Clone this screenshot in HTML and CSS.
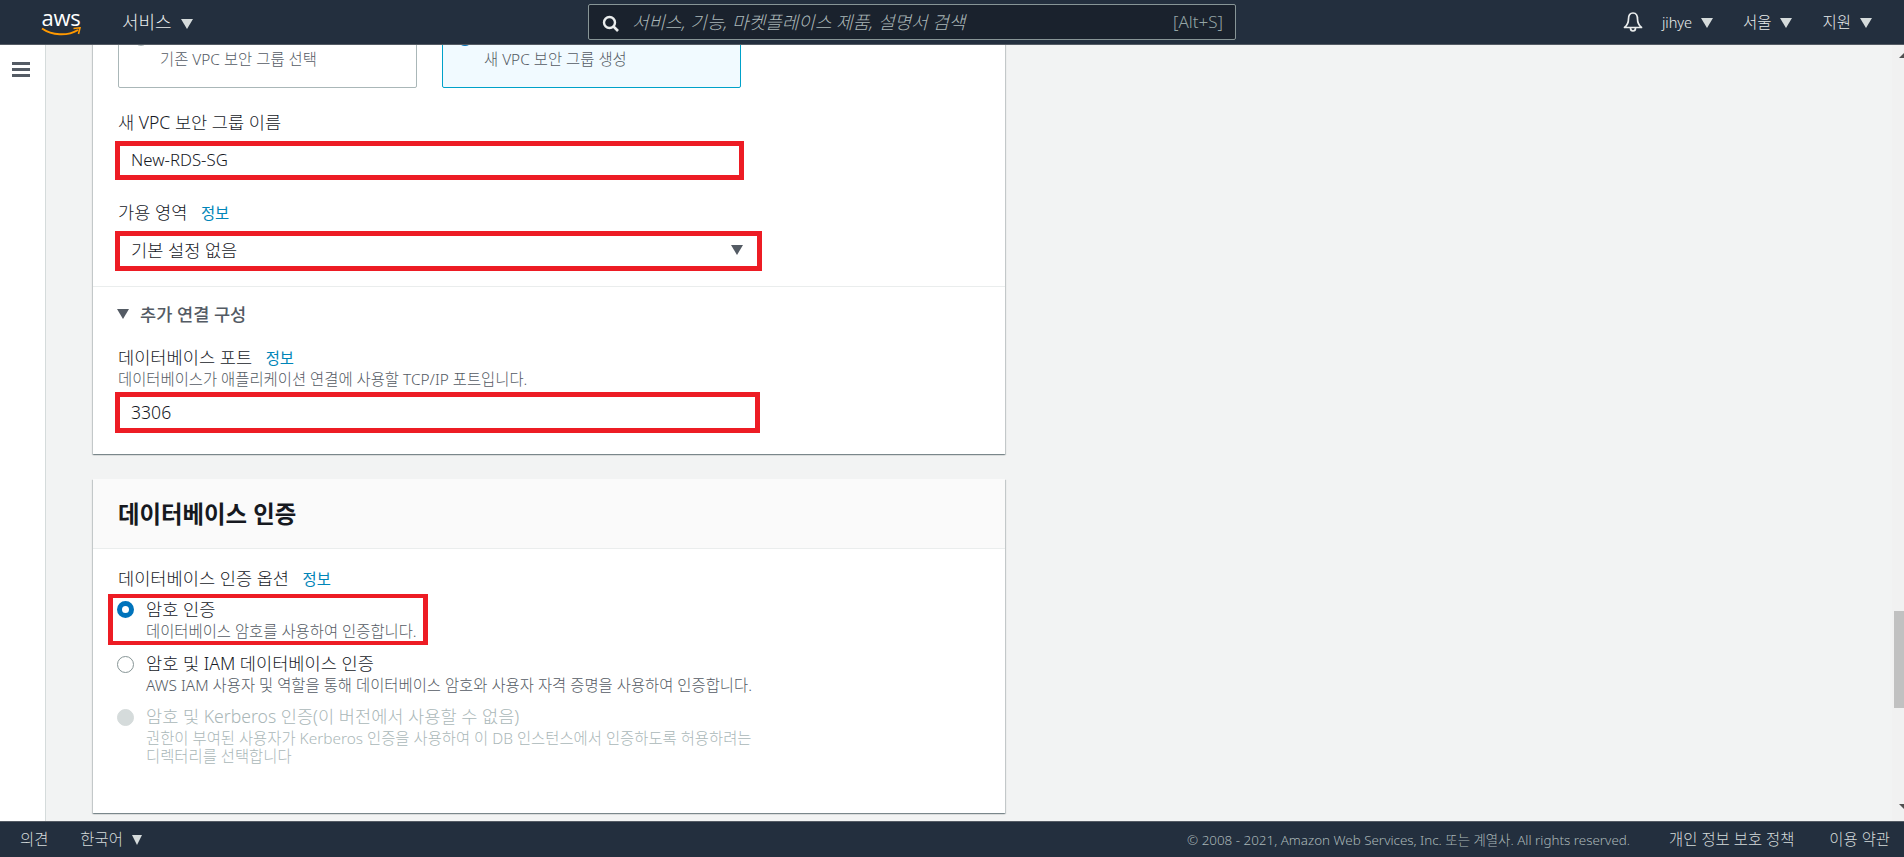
FILE: index.html
```html
<!doctype html>
<html lang="ko">

<head>
  <meta charset="UTF-8">
  <title>RDS</title>
  <link rel="stylesheet" href="styles.css">
</head>

<body>
  <header class="topnav">
    <div class="topnav-left">
      <a class="logo">
        <span class="logo-text">aws</span>
        <svg class="logo-smile" width="40" height="10" viewBox="0 0 40 10">
          <path d="M1 1.5C11 8.5 26 9.5 37 3" fill="none" stroke="#f90" stroke-width="2" />
          <path d="M32.5 1.5 39 .8 37.5 7" fill="none" stroke="#f90" stroke-width="1.6" />
        </svg>
      </a>
      <span class="menu-services">서비스 <i class="caret caret-nav"></i></span>
    </div>

    <div class="search">
      <svg class="search-icon" width="18" height="18" viewBox="0 0 18 18">
        <circle cx="7.5" cy="7.5" r="5.5" fill="none" stroke="#eaeded" stroke-width="2.4" />
        <path d="M11.5 11.5 16 16" stroke="#eaeded" stroke-width="2.6" />
      </svg>
      <span class="search-text">서비스, 기능, 마켓플레이스 제품, 설명서 검색</span>
      <span class="search-key">[Alt+S]</span>
    </div>

    <div class="topnav-right">
      <svg class="bell" width="20" height="22" viewBox="0 0 20 22">
        <path d="M10 2C6.500 2 5.500 5 5.500 8c0 4-1 6-4 8.500h17c-3-2.500-4-4.500-4-8.500 0-3-1-6-4.500-6Z" fill="none"
          stroke="#eaeded" stroke-width="1.700" stroke-linejoin="round" />
        <path d="M7.500 17c0 4 5 4 5 0" fill="none" stroke="#eaeded" stroke-width="1.700" />
      </svg>
      <span class="nav-item nav-user">jihye <i class="caret caret-nav"></i></span>
      <span class="nav-item">서울 <i class="caret caret-nav"></i></span>
      <span class="nav-item">지원 <i class="caret caret-nav"></i></span>
    </div>
  </header>

  <div class="layout">
    <nav class="sidebar">
      <span class="burger"></span>
    </nav>

    <main class="content">
      <div class="scrolled">
        <section class="card">
          <div class="card-body">
            <div class="tiles">
              <div class="tile">
                <span class="tile-radio"></span>
                <div>
                  <div class="tile-title">기존 항목 선택</div>
                  <div class="tile-desc">기존 VPC 보안 그룹 선택</div>
                </div>
              </div>
              <div class="tile tile-on">
                <span class="tile-radio"></span>
                <div>
                  <div class="tile-title">새로 생성</div>
                  <div class="tile-desc">새 VPC 보안 그룹 생성</div>
                </div>
              </div>
            </div>

            <div class="label label-first">새 VPC 보안 그룹 이름</div>
            <div class="redbox field field-name">New-RDS-SG</div>

            <div class="label label-az">가용 영역 <a class="info">정보</a></div>
            <div class="redbox field field-az">
              기본 설정 없음
              <i class="caret caret-select"></i>
            </div>
          </div>

          <div class="extra">
            <div class="extra-head"><i class="caret caret-select"></i> 추가 연결 구성</div>
            <div class="label">데이터베이스 포트 <a class="info">정보</a></div>
            <div class="hint">데이터베이스가 애플리케이션 연결에 사용할 TCP/IP 포트입니다.</div>
            <div class="redbox field field-port">3306</div>
          </div>
        </section>

        <section class="card card-auth">
          <h2 class="card-head">데이터베이스 인증</h2>
          <div class="auth-body">
            <div class="label">데이터베이스 인증 옵션 <a class="info">정보</a></div>

            <div class="redbox radio-box">
              <div class="radio-row">
                <span class="radio radio-on"></span>
                <div>
                  <div class="radio-title">암호 인증</div>
                  <div class="radio-desc">데이터베이스 암호를 사용하여 인증합니다.</div>
                </div>
              </div>
            </div>

            <div class="radio-row row-iam">
              <span class="radio"></span>
              <div>
                <div class="radio-title">암호 및 IAM 데이터베이스 인증</div>
                <div class="radio-desc">AWS IAM 사용자 및 역할을 통해 데이터베이스 암호와 사용자 자격 증명을 사용하여 인증합니다.</div>
              </div>
            </div>

            <div class="radio-row row-off">
              <span class="radio radio-off"></span>
              <div>
                <div class="radio-title">암호 및 Kerberos 인증(이 버전에서 사용할 수 없음)</div>
                <div class="radio-desc">권한이 부여된 사용자가 Kerberos 인증을 사용하여 이 DB 인스턴스에서 인증하도록 허용하려는<br>디렉터리를 선택합니다</div>
              </div>
            </div>
          </div>
        </section>
      </div>

      <div class="scrollbar">
        <i class="arrow arrow-up"></i>
        <span class="thumb"></span>
        <i class="arrow arrow-down"></i>
      </div>
    </main>
  </div>

  <footer class="bottombar">
    <span class="foot-link">의견</span>
    <span class="foot-link foot-lang">한국어 <i class="caret caret-foot"></i></span>
    <span class="copyright">© 2008 - 2021, Amazon Web Services, Inc. 또는 계열사. All rights reserved.</span>
    <span class="foot-link">개인 정보 보호 정책</span>
    <span class="foot-link foot-terms">이용 약관</span>
  </footer>
</body>

</html>
```

FILE: styles.css
```css
html,
body {
  height: 100%;
}

body {
  margin: 0;
  display: flex;
  flex-direction: column;
  overflow: hidden;
  font: 300 17.6px/22px "Noto Sans", "Noto Sans CJK KR", sans-serif;
  color: #16191f;
  background: #f2f3f3;
}

/* top nav */
.topnav {
  flex: none;
  height: 44px;
  display: flex;
  align-items: center;
  background: #232f3e;
  border-bottom: 1px solid #545b64;
  color: #eaeded;
}

.topnav-left {
  width: 588px;
  display: flex;
  align-items: center;
  flex: none;
}

.logo {
  width: 40px;
  margin-left: 41px;
  display: flex;
  flex-direction: column;
  align-items: center;
}

.logo-text {
  font: 500 22px/18px "Open Sans", sans-serif;
  color: #fff;
  letter-spacing: -.3px;
}

.logo-smile {
  display: block;
  margin-top: 1px;
}

.menu-services {
  margin-left: 41px;
  font-size: 18px;
  white-space: nowrap;
}

.search {
  width: 648px;
  height: 36px;
  box-sizing: border-box;
  display: flex;
  align-items: center;
  flex: none;
  padding: 0 12px 0 13px;
  background: #1a222d;
  border: 1px solid #879596;
  border-radius: 2px;
}

.search-icon {
  margin-top: 3px;
}

.search-text {
  margin-left: 12px;
  font-size: 18px;
  font-style: italic;
  color: #aab7b8;
}

.search-key {
  margin-left: auto;
  font-size: 17px;
  color: #95a5a6;
}

.topnav-right {
  flex: 1;
  display: flex;
  align-items: center;
  justify-content: flex-end;
  padding-right: 32px;
  font-size: 15.5px;
}

.nav-item {
  margin-left: 30px;
  white-space: nowrap;
}

.nav-user {
  margin-left: 19px;
  font-size: 14.5px;
}

.caret {
  display: inline-block;
  width: 0;
  height: 0;
  border-style: solid;
  border-color: currentColor transparent transparent;
}

.caret-nav {
  margin-left: 5px;
  border-width: 10px 6px 0;
  color: #d5dbdb;
}

.caret-select {
  border-width: 10px 6px 0;
  color: #545b64;
}

.caret-foot {
  margin-left: 5px;
  border-width: 10px 5.500px 0;
  color: #d5dbdb;
}

/* page */
.layout {
  flex: 1;
  min-height: 0;
  display: flex;
}

.sidebar {
  flex: none;
  width: 45px;
  background: #fff;
  border-right: 1px solid #d5dbdb;
}

.burger {
  display: block;
  width: 18px;
  height: 3px;
  margin: 17px 0 0 12px;
  background: #545b64;
  box-shadow: 0 6px 0 #545b64, 0 12px 0 #545b64;
}

.content {
  flex: 1;
  position: relative;
  overflow: hidden;
}

/* scroll position of the page */
.scrolled {
  margin: -23px 0 0 47px;
  width: 912px;
}

.card {
  background: #fff;
  box-shadow: 0 1px 1px 0 rgba(0, 28, 36, .3), 1px 1px 1px 0 rgba(0, 28, 36, .15), -1px 1px 1px 0 rgba(0, 28, 36, .15);
}

.card-body {
  padding: 0 25px 15px;
  border-bottom: 1px solid #eaeded;
}

.tiles {
  display: flex;
  gap: 25px;
}

.tile {
  width: 299px;
  height: 66px;
  box-sizing: border-box;
  display: flex;
  gap: 11px;
  padding: 5px 0 0 14px;
  background: #fff;
  border: 1px solid #aab7b8;
  border-radius: 2px;
}

.tile-on {
  background: #f1faff;
  border-color: #00a1c9;
}

.tile-radio {
  width: 14px;
  height: 14px;
  margin-top: 2px;
  border-radius: 50%;
  border: 1px solid #aab7b8;
  background: #fff;
}

.tile-on .tile-radio {
  border: 4px solid #0073bb;
  width: 8px;
  height: 8px;
}

.tile-title {
  line-height: 16px;
}

.tile-desc {
  margin-top: 6px;
  font-size: 15.4px;
  line-height: 20px;
  color: #545b64;
}

.label {
  line-height: 22px;
}

.label-first {
  margin-top: 23px;
}

.label-az {
  margin-top: 21px;
}

.info {
  margin-left: 9px;
  font-size: 15.4px;
  font-weight: 400;
  line-height: 1;
  color: #0085b8;
}

.hint {
  margin-top: 3px;
  font-size: 15.4px;
  line-height: 18px;
  color: #545b64;
  white-space: nowrap;
}

/* red annotation boxes from the screenshot */
.redbox {
  box-sizing: border-box;
  border: 5px solid #ed1c24;
  background: #fff;
}

.field {
  display: flex;
  align-items: center;
  justify-content: space-between;
  margin: 8px 0 0 -3px;
  padding: 0 14px 2px 11px;
}

.field-name {
  width: 629px;
  height: 39px;
  font-size: 16.8px;
}

.field-az {
  width: 647px;
  height: 40px;
  padding-bottom: 3px;
}

.field-port {
  width: 645px;
  height: 41px;
  margin-top: 3px;
}

.extra {
  padding: 16px 25px 21px;
}

.extra-head {
  display: flex;
  align-items: center;
  gap: 11px;
  margin-bottom: 21px;
  color: #545b64;
  font-weight: 500;
  margin-left: -1px;
}

.card-auth {
  margin-top: 25px;
}

.card-head {
  margin: 0;
  height: 70px;
  padding-left: 25px;
  display: flex;
  align-items: center;
  box-sizing: border-box;
  font-size: 23.4px;
  font-weight: 700;
  background: #fafafa;
  border-bottom: 1px solid #eaeded;
}

.auth-body {
  padding: 18px 25px 47px;
}

.radio-box {
  width: 320px;
  height: 51px;
  margin: 5px 0 0 -10px;
  padding: 1px 0 0 5px;
  border-width: 4px 5px;
}

.radio-row {
  display: flex;
  gap: 12px;
}

.row-iam {
  margin-top: 8px;
}

.row-off {
  margin-top: 11px;
  color: #aab7b8;
}

.radio {
  flex: none;
  width: 17px;
  height: 17px;
  box-sizing: border-box;
  margin: 3px 0 0 -1px;
  border: 1px solid #879596;
  border-radius: 50%;
  background: #fff;
}

.radio-box .radio {
  margin-top: 2px;
}

.radio-on {
  border: 5px solid #0073bb;
}

.radio-off {
  border-color: #d5dbdb;
  background: #d5dbdb;
}

.radio-title {
  line-height: 20px;
}

.radio-desc {
  margin-top: 4px;
  font-size: 15.4px;
  line-height: 18px;
  color: #545b64;
  white-space: nowrap;
}

.row-off .radio-desc {
  color: #aab7b8;
}

/* fake scrollbar, sits over the gray area */
.scrollbar {
  position: absolute;
  top: 0;
  right: 0;
  bottom: 0;
  width: 12px;
  display: flex;
  flex-direction: column;
  align-items: flex-end;
  background: #f1f1f1;
}

.arrow {
  width: 0;
  height: 0;
  margin-right: -5px;
  border-style: solid;
  border-color: transparent;
}

.arrow-up {
  margin-top: 8px;
  border-width: 0 5px 5px;
  border-bottom-color: #505050;
}

.arrow-down {
  margin-top: 96px;
  border-width: 5px 5px 0;
  border-top-color: #505050;
}

.thumb {
  display: block;
  width: 10px;
  height: 97px;
  margin-top: 553px;
  background: #c1c1c1;
}

/* footer */
.bottombar {
  flex: none;
  height: 36px;
  box-sizing: border-box;
  display: flex;
  align-items: center;
  padding: 0 14px 0 20px;
  background: #232f3e;
  border-top: 1px solid #545b64;
  color: #d5dbdb;
  font-size: 15.4px;
}

.foot-lang {
  margin-left: 32px;
}

.copyright {
  margin: 0 39px 0 auto;
  color: #aab7b8;
  font-size: 13.4px;
}

.foot-terms {
  margin-left: 35px;
}
```
